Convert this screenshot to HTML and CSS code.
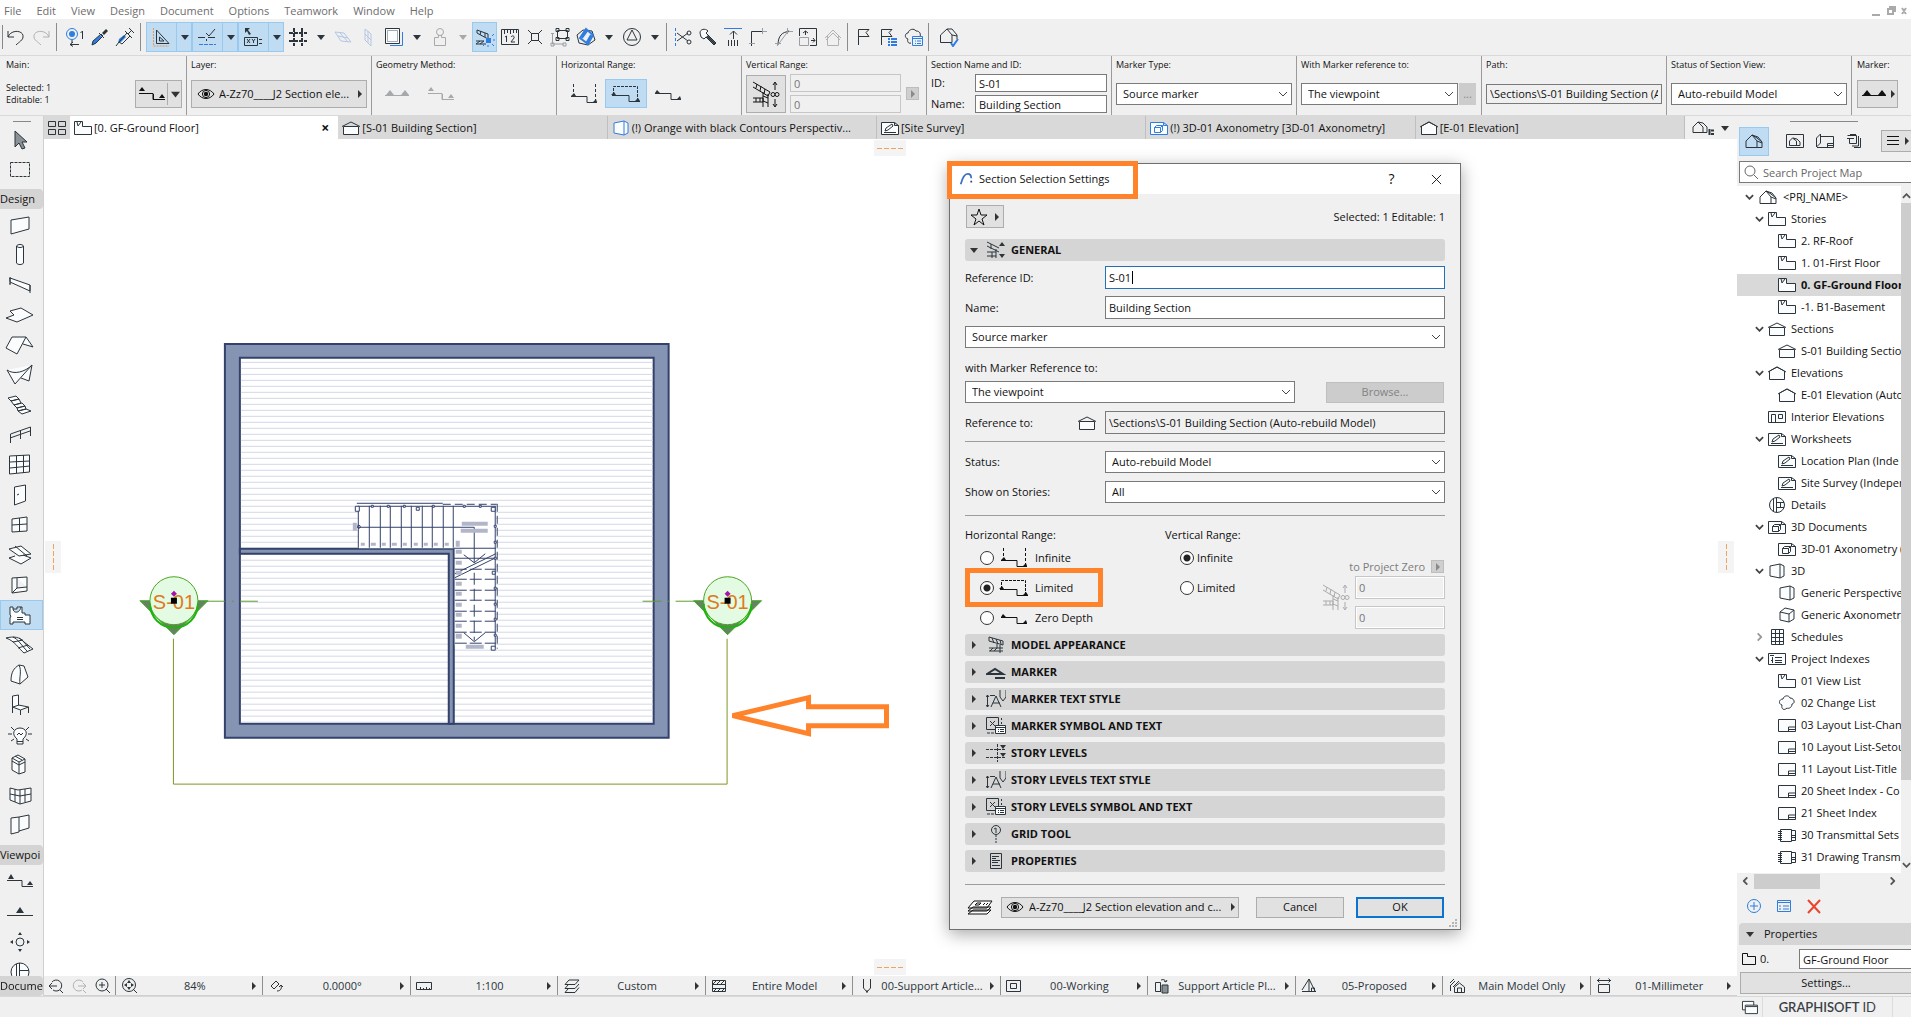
FILE: index.html
```html
<!DOCTYPE html>
<html lang="en">
<head>
<meta charset="utf-8">
<title>Section Selection Settings</title>
<link rel="stylesheet" href="styles.css">
</head>
<body>
<svg class="defs" aria-hidden="true">
  <!-- generic glyphs -->
  <symbol id="down" viewBox="0 0 8 6"><path class="solid" d="M0 1h8L4 6z"/></symbol>
  <symbol id="right" viewBox="0 0 6 8"><path class="solid" d="M1 0v8l4-4z"/></symbol>
  <symbol id="chev" viewBox="0 0 10 6"><path d="M1 1l4 4 4-4"/></symbol>
  <symbol id="eye" viewBox="0 0 18 12"><path d="M1 6c4-6 12-6 16 0-4 6-12 6-16 0z"/><circle cx="9" cy="6" r="3.6"/><circle class="solid" cx="9" cy="6" r="2.2"/></symbol>
  <!-- section line markers -->
  <symbol id="sec-line" viewBox="0 0 30 20"><path d="M2 9.500h14v6h12M16.500 10v5"/><path class="solid" d="M2 7l3-4 3 4zM22 14l3-4 3 4z"/></symbol>
  <symbol id="sec-flat" viewBox="0 0 30 20"><path d="M3 11.500h24"/><path class="solid" d="M4 11l4-5 4 5zM19 11l4-5 4 5z"/></symbol>
  <symbol id="sec-inf" viewBox="0 0 30 20"><path d="M2 12.500h16v6h10"/><path stroke-dasharray="3 2" d="M4.500 0v12M26.500 0v17"/><path class="solid" d="M2 12l3-3 2 3zM24 18l3-3 1 3z"/></symbol>
  <symbol id="sec-lim" viewBox="0 0 30 20"><path d="M1 11.500h17v6h11"/><path stroke-dasharray="3 1" d="M2.500 11V2.500h24V17"/><path class="solid" d="M0 11l3-3 2 3zM24 17l3-3 2 3z"/></symbol>
  <symbol id="sec-zero" viewBox="0 0 30 20"><path d="M2 9.500h16v6h10"/><path class="solid" d="M2 9l2-3 3 3zM24 15l3-3 1 3z"/></symbol>
  <symbol id="vrange" viewBox="0 0 28 28"><path d="M1 2l17 10-2 4L1 7M5 4l-1 4M9 6l-1 5M13 9l-1 5M1 18h10v4H1M4 18v4M8 18v4M11 12v15M16 14v13M11 16l5 2M11 21l5 2M23 10V3M21 5l2-3 2 3M23 19v7M21 24l2 3 2-3"/><circle cx="21" cy="14.500" r="2"/><circle cx="25" cy="14.500" r="2"/></symbol>
  <!-- document kinds -->
  <symbol id="story" viewBox="0 0 18 16"><path class="paper" d="M.5 1.500h8v5h9v8H.5zM3 2l1 4 3-4"/></symbol>
  <symbol id="section" viewBox="0 0 18 16"><path class="paper" d="M1.500 6.500h15v8h-15z"/><path d="M0 6.500L9 2l9 4.500"/></symbol>
  <symbol id="elev" viewBox="0 0 18 16"><path class="paper" d="M1.500 14.500V6L9 2l7.500 4v8.500z"/><path d="M0 7l9-5 9 5"/></symbol>
  <symbol id="interior" viewBox="0 0 18 16"><path class="paper" d="M.5 2.500h17v11H.5zM3.500 14V5.500h4V14M10.500 5.500h4v4h-4z"/></symbol>
  <symbol id="sheet" viewBox="0 0 18 16"><path class="paper" d="M.5 2.500h13l4 3v9H.5zM13.500 2.500v3h4M3 12.500h12M4 11l1-3 6-4 1 2-5 4z"/></symbol>
  <symbol id="detail" viewBox="0 0 18 16"><circle class="paper" cx="9" cy="8" r="7.500"/><path d="M5.500 2v12M8.500 1v14M9 5.500h7M9 10.500h7M12.500 6v4"/></symbol>
  <symbol id="doc3d" viewBox="0 0 18 16"><path class="paper" d="M.5 2.500h13l4 3v9H.5zM13.500 2.500v3h4M4.500 7.500h6v5h-6zM4.500 7.500l2-2h6l-2 2M12.500 5.500v5l-2 2"/></symbol>
  <symbol id="persp" viewBox="0 0 18 16"><path class="paper" d="M2 3l10-2 4 2v10l-4 2-10-2zM12 1v14"/></symbol>
  <symbol id="axo" viewBox="0 0 18 16"><path class="paper" d="M2 5l5-4 9 2v9l-5 3-9-2zM2 5l9 2v8M11 7l5-4"/></symbol>
  <symbol id="sched" viewBox="0 0 18 16"><path class="paper" d="M3.500.5h12v15h-12zM3 4.500h12M3 8.500h12M3 12.500h12M7.500 1v14M11.500 1v14"/></symbol>
  <symbol id="index" viewBox="0 0 18 16"><path class="paper" d="M.5 2.500h17v11H.5z"/><path d="M7 6.500h7M7 9.500h7M7 11.500h7M4.500 6v6M2 4.500h4M3 9.500h2"/></symbol>
  <symbol id="cloud" viewBox="0 0 18 16"><path class="paper" d="M5 4c1-4 6-4 7-1 4 0 6 5 2 6 0 4-4 5-5 4-3 3-6 1-5-3C0 9 1 4 5 4z"/></symbol>
  <symbol id="layout" viewBox="0 0 18 16"><path class="paper" d="M.5 2.500h17v12H.5zM10.500 14v-4h7M10.500 12.500h7"/></symbol>
  <symbol id="trans" viewBox="0 0 18 16"><path class="paper" d="M2.500 2.500h11v12h-11zM13.500 3.500h4v10h-4M13.500 8.500h4M13.500 10.500h4M0 4.500h4M0 6.500h4M0 8.500h4M0 10.500h4M0 12.500h4"/></symbol>
  <symbol id="house" viewBox="0 0 18 14"><path d="M1 13.500V7l6-6 5 6v6.500zM7 1l6 2 4 5v5.500h-5M12 7l5 2M7 1l5 3 5 4"/></symbol>
  <!-- settings chapters -->
  <symbol id="general" viewBox="0 0 20 18"><path d="M1 1l12 6M1 5l12 6M5 3v5M1 11h9M1 15h9M10 8v9M6 11v6"/><path class="solid" d="M13 5h6l-3-4zM13 13h6l-3 4z"/></symbol>
  <symbol id="model" viewBox="0 0 20 18"><path d="M3 1l14 4v4L3 5zM6 2l2 5M10 3l2 5M14 4l1 4M3 12h14M3 15h14M4 15l3-3M8 15l3-3M14 9v8M11 8v4"/></symbol>
  <symbol id="marker" viewBox="0 0 20 18"><path stroke-width="2" d="M1 11h16L9 6zM9 15h10"/></symbol>
  <symbol id="tstyle" viewBox="0 0 20 18"><path d="M1.500 5v12M0 7l1.500-2L3 7M0 15l1.500 2L3 15M4 5.500h5M5 17l5-11 5 11M7 13h7M14 0v7l3 4 3-4V0"/></symbol>
  <symbol id="symtext" viewBox="0 0 20 18"><path d="M.5.5h12v12H.5zM4 4l5 5M9 4l-5 5"/><path class="paper" d="M9.500 8.500h10v8h-10z"/><path d="M10 10.500h9M12 12.500h1M14 12.500h4M12 14.500h1M14 14.500h4M1 16h3M5 16h3M15.500 1v2M15.500 5v2"/></symbol>
  <symbol id="levels" viewBox="0 0 20 18"><path stroke-dasharray="3 1" d="M0 5.500h20M0 13.500h20M11.500 0v18"/><path class="solid" d="M14 1h6l-3 4zM14 9h6l-3 4z"/></symbol>
  <symbol id="grid-tool" viewBox="0 0 20 18"><circle cx="10" cy="5" r="4.500"/><path d="M8 4l2-1v5"/><path stroke-dasharray="2 1" d="M10 10v8"/></symbol>
  <symbol id="props" viewBox="0 0 20 18"><path d="M4.500 1.500h11v15h-11zM6 4.500h7M6 6.500h4M6 8.500h8M6 10.500h6M6 13.500h8"/></symbol>
  <symbol id="layers" viewBox="0 0 26 16"><path class="paper" d="M1 15l5-4h18l-4 4zM1 12l5-4h18l-4 4zM1 9l6-7h18l-5 7zM8 6l2-2h4l-2 2zM16 6l2-2M19 6l2-2"/></symbol>
</svg>

<nav class="menu">
  <a href="#">File</a><a href="#">Edit</a><a href="#">View</a><a href="#">Design</a><a href="#">Document</a><a href="#">Options</a><a href="#">Teamwork</a><a href="#">Window</a><a href="#">Help</a>
  <svg class="winctl" viewBox="0 0 36 12"><path d="M1 10h8M17 4h5v5h-5zM18 2h6v5M31 3l4 6M35 3l-4 6" stroke-width="2"/></svg>
</nav>

<div class="toolbar">
  <button class="tb" aria-label="Undo"><svg viewBox="0 0 20 20"><path d="M2 4v6h6M2 10c3-8 16-7 15 0 0 3-4 5-7 8"/></svg></button>
  <button class="tb dim" aria-label="Redo"><svg viewBox="0 0 20 20"><path d="M18 4v6h-6M18 10C15 2 2 3 3 10c0 3 4 5 7 8"/></svg></button>
  <i class="sep"></i>
  <button class="tb" aria-label="Find"><svg viewBox="0 0 20 20"><g class="blue"><circle cx="7" cy="7" r="5.500"/></g><circle cx="7" cy="7" r="3" class="bsolid"/><path d="M7 13v3M17.500 12V4l-2 2M14 17.500H5M8 15l-3 2.500 3 2"/></svg></button>
  <button class="tb" aria-label="Pick up"><svg viewBox="0 0 20 20"><path class="bsolid" d="M2 18l1-4 7-6 2 2-7 7z"/><path d="M9 6l5 5M2 18l1-4 8-7 2 2-7 7z"/><path class="solid" d="M12 6l4-4 2 2-4 4z"/></svg></button>
  <button class="tb" aria-label="Inject"><svg viewBox="0 0 20 20"><path class="bsolid" d="M3 16l1-4 5-4 2 2-5 5z"/><path d="M1 19l3-4 8-9 3 3-8 8-3-2M10 4l7 7M13 7l4-4M14 1l5 5"/></svg></button>
  <i class="sep"></i>
  <span class="split on"><button class="tb" aria-label="Guide lines"><svg viewBox="0 0 20 20"><path d="M5.500 3v13.500H18zM8.500 10v4H13z"/><path class="orange" stroke-dasharray="2 1" d="M2.500 1v18H18"/></svg></button><button class="dd" aria-label="More"><svg><use href="#down"/></svg></button></span>
  <span class="split on"><button class="tb" aria-label="Snap guides"><svg viewBox="0 0 20 20"><path d="M1 10.500h7M9 6l3 3 6-7M11 10.500h7M9.500 12v2"/><path class="blue" stroke-dasharray="4 1" d="M2 17.500h17"/></svg></button><button class="dd" aria-label="More"><svg><use href="#down"/></svg></button></span>
  <span class="split on"><button class="tb" aria-label="Tracker"><svg viewBox="0 0 20 20"><path d="M1.500 10.500h13v8h-13zM4 12l3 4M7 12l-3 4M9 12l1.500 2 1.500-2M10.500 14v2M16 12.500h3M16 16.500h3"/><path class="solid" d="M2 1h5L5 3l3 4-2 1-2-4-2 2z"/></svg></button><button class="dd" aria-label="More"><svg><use href="#down"/></svg></button></span>
  <span class="split"><button class="tb" aria-label="Grid snap"><svg viewBox="0 0 20 20"><path stroke-width="2" stroke-dasharray="4 1" d="M1 6h18M1 14h18M6 1v18M14 1v18"/></svg></button><button class="dd" aria-label="More"><svg><use href="#down"/></svg></button></span>
  <button class="tb pale" aria-label="Plane"><svg viewBox="0 0 20 20"><path d="M2 5l9 1 7 9-10-1zM5 9l10 2M7 6l8 9"/></svg></button>
  <button class="tb pale" aria-label="Wall plane"><svg viewBox="0 0 20 20"><path d="M7 2l6 5v12l-6-6zM10 4v12M7 7l6 6"/></svg></button>
  <span class="split"><button class="tb" aria-label="Trace"><svg viewBox="0 0 20 20"><path class="blue" d="M6 18.500h12.500V5"/><path class="paper" d="M1.500 1.500h14v15h-14z"/><path d="M3.500 3.500h10v11h-10z" opacity=".4"/></svg></button><button class="dd" aria-label="More"><svg><use href="#down"/></svg></button></span>
  <span class="split dim"><button class="tb" aria-label="Stamp"><svg viewBox="0 0 20 20"><circle cx="10" cy="5" r="3.500"/><path d="M8.500 8v2.500h-4v8h11v-8h-4V8"/></svg></button><button class="dd" aria-label="More"><svg><use href="#down"/></svg></button></span>
  <button class="tb on" aria-label="Suspend groups"><svg viewBox="0 0 20 20"><path d="M2 3l11 4v5L2 6zM6 4l-1 4M10 6v4M1 14h8M1 17h10M1 17l4-3M5 17l4-3"/><path class="bsolid" d="M11 11h5v5h-5z"/><path class="blue" d="M17 9l2-2M18 13h2M17 17l2 2M13 18v2M9 18l-1 1"/></svg></button>
  <button class="tb" aria-label="Ruler"><svg viewBox="0 0 20 20"><path d="M1.500 2.500h17v15h-17zM4.500 3v4M7.500 3v3M10.500 3v4M13.500 3v3M16.500 3v3M5 10l1.500-1v6M11 10c1-2 4-1 3 1l-3 4h4"/></svg></button>
  <button class="tb" aria-label="Explode"><svg viewBox="0 0 20 20"><path d="M6.500 6.500h7v7h-7zM3 3l4 4M17 3l-4 4M3 17l4-4M17 17l-4-4"/></svg></button>
  <button class="tb" aria-label="Group"><svg viewBox="0 0 20 20"><path d="M7.500 3.500h10v8h-10zM6 1.500h3v3H6zM16 1.500h3v3h-3zM16 10.500h3v3h-3zM6 10.500h3v3H6z"/><path class="mid" d="M2.500 7v10h11M1 6.500h3M1 16h3v3H1zM13 16h3v3h-3z"/></svg></button>
  <span class="split"><button class="tb" aria-label="3D projection"><svg viewBox="0 0 20 20"><path d="M1 8l6-5 9 1 3 9-7 5-9-2z"/><path class="blue" stroke-width="2" d="M10 2l7 6-5 9-8-6zM6 11l5-7M11 15l4-7"/></svg></button><button class="dd" aria-label="More"><svg><use href="#down"/></svg></button></span>
  <span class="split"><button class="tb" aria-label="Orbit"><svg viewBox="0 0 20 20"><circle cx="10" cy="10" r="8.500"/><path d="M10 3l-5 10h10z"/></svg></button><button class="dd" aria-label="More"><svg><use href="#down"/></svg></button></span>
  <i class="sep tight"></i>
  <button class="tb" aria-label="Trim"><svg viewBox="0 0 20 20"><path class="blue" stroke-dasharray="3 2" d="M2.500 1v18"/><path d="M4 6l11 8M4 14l11-8"/><circle cx="16" cy="6" r="2"/><circle cx="16" cy="15" r="2"/></svg></button>
  <button class="tb" aria-label="Adjust"><svg viewBox="0 0 20 20"><path class="paper" d="M2 6c0-4 5-5 8-2L8 6l10 10-2 2L8 10l-2 2-3-2z"/><path stroke-width="2" d="M9 9l8 8"/></svg></button>
  <button class="tb" aria-label="Elevate"><svg viewBox="0 0 20 20"><path class="blue" d="M1 1.500h18"/><path d="M10.500 12V4M7 7.500L10.500 4 14 7.500M5.500 13v6M8.500 13v6M11.500 13v6M14.500 13v6"/></svg></button>
  <button class="tb" aria-label="Intersect"><svg viewBox="0 0 20 20"><path d="M3.500 19V4.500H14"/><path class="mid" d="M14 4.500h5M14.500 1v6M1 16.500h6"/></svg></button>
  <button class="tb" aria-label="Fillet"><svg viewBox="0 0 20 20"><path d="M5 18C5 9 9 4.500 17 4.500"/><path class="mid" d="M4 19L16 3M14.500 1v6M2 16.500h6M16 4.500h4"/></svg></button>
  <button class="tb" aria-label="Resize"><svg viewBox="0 0 20 20"><path d="M1.500 9V1.500h17v17H12M7.500 8V4M5 6l2.500-2L10 6M13 13.500h4M15 11l2 2.500-2 2"/><path class="mid" d="M1.500 10.500h9v8h-9z"/></svg></button>
  <button class="tb dim" aria-label="Home story"><svg viewBox="0 0 20 20"><path d="M2 11l8-8 8 8M4.500 9v9.500h11V9M3 13l7-7 7 7"/></svg></button>
  <i class="sep tight"></i>
  <button class="tb" aria-label="Flag"><svg viewBox="0 0 20 20"><path d="M4.500 18V2.500H15l-3 3 3 4H5"/></svg></button>
  <button class="tb" aria-label="Flag list"><svg viewBox="0 0 20 20"><path d="M2.500 18V2.500H13l-3 3 3 4H3"/><path class="blue" stroke-width="2" d="M9 12h2M12 12h6M9 15h2M12 15h6M9 18h2M12 18h6"/></svg></button>
  <button class="tb" aria-label="Change"><svg viewBox="0 0 20 20"><path d="M7 16c-3 1-4-2-3-4-4-1-3-6 0-6 1-4 6-5 8-2 4 0 5 3 4 6"/><path class="blue" d="M8.500 9.500h10v9h-10zM9 11.500h10M11 14h1M13 14h4M11 16.500h1M13 16.500h4"/></svg></button>
  <i class="sep tight"></i>
  <button class="tb wide" aria-label="Check model"><svg viewBox="0 0 20 20"><path d="M1.500 15.500V8L8 2l5 6v7.500zM8 2h5l5 6v4M13 8l5 1"/><path class="blue" stroke-width="2" d="M12 16l2 3 5-7"/></svg></button>
</div>

<div class="infobox">
  <section><h2>Main:</h2><div class="row between"><p class="tiny">Selected: 1<br>Editable: 1</p><button class="btn b47" aria-label="Default settings"><svg class="s30"><use href="#sec-line"/></svg><svg class="ar bar"><use href="#down"/></svg></button></div></section>
  <section><h2>Layer:</h2><div class="row"><button class="btn grow"><svg class="eye"><use href="#eye"/></svg><span class="clip">A-Zz70____J2 Section ele...</span><svg class="ar"><use href="#right"/></svg></button></div></section>
  <section><h2>Geometry Method:</h2><div class="row geo dim"><svg class="s30"><use href="#sec-flat"/></svg><svg class="s30"><use href="#sec-line"/></svg></div></section>
  <section><h2>Horizontal Range:</h2><div class="row hr"><button class="ib" aria-label="Infinite"><svg class="s30"><use href="#sec-inf"/></svg></button><button class="ib on" aria-label="Limited"><svg class="s30"><use href="#sec-lim"/></svg></button><button class="ib" aria-label="Zero depth"><svg class="s30"><use href="#sec-zero"/></svg></button></div></section>
  <section><h2>Vertical Range:</h2><div class="row"><button class="btn vr" aria-label="Vertical range"><svg class="s28"><use href="#vrange"/></svg></button><div class="stack grow"><input disabled value="0" aria-label="Top"><input disabled value="0" aria-label="Bottom"></div><button class="mini" disabled aria-label="Link"><svg class="ar"><use href="#right"/></svg></button></div></section>
  <section><h2>Section Name and ID:</h2><div class="row"><div class="pair grow"><label for="id1">ID:</label><input id="id1" value="S-01"><label for="nm1">Name:</label><input id="nm1" value="Building Section"></div></div></section>
  <section><h2>Marker Type:</h2><div class="row"><span class="sel grow"><select aria-label="Marker type"><option>Source marker</option></select><svg><use href="#chev"/></svg></span></div></section>
  <section><h2>With Marker reference to:</h2><div class="row tightrow"><span class="sel grow"><select aria-label="Marker reference"><option>The viewpoint</option></select><svg><use href="#chev"/></svg></span><button class="dots" disabled>...</button></div></section>
  <section><h2>Path:</h2><div class="row"><input class="ro grow" readonly aria-label="Path" value="\Sections\S-01 Building Section (Auto-rebuild Model)"></div></section>
  <section><h2>Status of Section View:</h2><div class="row"><span class="sel grow"><select aria-label="Status"><option>Auto-rebuild Model</option></select><svg><use href="#chev"/></svg></span></div></section>
  <section><h2>Marker:</h2><div class="row"><button class="btn b41" aria-label="Marker"><svg class="s30"><use href="#sec-flat"/></svg><svg class="ar"><use href="#right"/></svg></button></div></section>
</div>

<div class="main">
  <aside class="tools">
    <i class="handle"></i>
    <button aria-label="Arrow"><svg viewBox="0 0 30 24"><path class="greyfill" d="M10 3v16l4-4 3 6 3-1-3-6h5z"/></svg></button>
    <button aria-label="Marquee"><svg viewBox="0 0 30 24"><path stroke-dasharray="3 1" d="M5.500 4.500h19v14h-19z"/></svg></button>
    <h3>Design</h3>
    <button aria-label="Wall"><svg viewBox="0 0 30 24"><path class="paper" d="M6 7l18-3v12L6 21z"/></svg></button>
    <button aria-label="Column"><svg viewBox="0 0 30 24"><path class="paper" d="M11.500 3v17c1 2 6 2 7 0V3c-1-2-6-2-7 0zc1 2 6 2 7 0"/></svg></button>
    <button aria-label="Beam"><svg viewBox="0 0 30 24"><path class="paper" d="M5 5l20 7v6L5 9zM5 5v6M4 5h2M4 11h2M25 12v8"/></svg></button>
    <button aria-label="Slab"><svg viewBox="0 0 30 24"><path class="paper" d="M1 15l8-3-4-4 11-3 12 7-16 7z"/></svg></button>
    <button aria-label="Roof"><svg viewBox="0 0 30 24"><path class="paper" d="M7 4h14l-9 17-11-6zM21 4l7 10-10-3"/></svg></button>
    <button aria-label="Shell"><svg viewBox="0 0 30 24"><path class="paper" d="M2 7c7 5 18 2 25-5l-3 16-8-3M27 2L10 21 2 7"/></svg></button>
    <button aria-label="Stair"><svg viewBox="0 0 30 24"><path class="paper" d="M3 5l8-2 3 3-8 2zM6 8l8-2 2 4-7 2zM9 12l8-2 3 3-8 2zM12 15l8-2 1 3-8 2zM13 18l8-2 5 2-9 3z"/></svg></button>
    <button aria-label="Railing"><svg viewBox="0 0 30 24"><path d="M5.500 20v-9l20-7v9M15.500 7v9M5 15l20-7"/></svg></button>
    <button aria-label="Curtain wall"><svg viewBox="0 0 30 24"><path class="paper" d="M4.500 3l20-1v17l-20 2zM5 9l20-1M5 15l20-2M11.500 3v17M18.500 2v18"/></svg></button>
    <button aria-label="Door"><svg viewBox="0 0 30 24"><path class="paper" d="M9.500 4l11-2v16l-11 4zM12 12l2-1"/></svg></button>
    <button aria-label="Window"><svg viewBox="0 0 30 24"><path class="paper" d="M7 6l15-2v14L7 19zM14.500 5v14M7 12l15-1"/></svg></button>
    <button aria-label="Skylight"><svg viewBox="0 0 30 24"><path class="paper" d="M4 6l12-3 10 8-12 2zM4 15l6-2M4 15l12 6 10-6-8-3M10 3l12 10"/></svg></button>
    <button aria-label="Opening"><svg viewBox="0 0 30 24"><path class="paper" d="M7 5l15-1v14L7 20zM12 5v10l10-1M12 15l-5 5"/></svg></button>
    <button class="on" aria-label="Zone"><svg viewBox="0 0 30 24"><path class="paper" d="M5 4h3v2h4V4h5v6h3v2h5v9h-5v-2H8v2H5v-6l1-2-1-1zM8 6c1 5 7 4 8-2M12 14.500h6M12 16.500h6"/></svg></button>
    <button aria-label="Mesh"><svg viewBox="0 0 30 24"><path class="paper" d="M1 5c8-2 14-1 18 4l9 7-9 4C14 16 10 8 1 5zM8 4c5 2 9 9 14 14M14 5c5 3 7 7 11 11M8 9l10-2M13 15l10-3"/></svg></button>
    <button aria-label="Morph"><svg viewBox="0 0 30 24"><path class="paper" d="M6 18c0-9 3-13 8-16l5 1 4 11-8 7zM14 2c3 6 0 12 1 19"/></svg></button>
    <button aria-label="Object"><svg viewBox="0 0 30 24"><path class="paper" d="M7.500 3l6-1v10l10 2-8 3-8-3z"/><path d="M7.500 3v17M15.500 17v5M23.500 14v6M8 14l6-2"/></svg></button>
    <button aria-label="Lamp"><svg viewBox="0 0 30 24"><path class="paper" d="M12 16c-6-5-3-11 3-11s9 6 3 11v5h-6zM12 18.500h6M12 12l2-2 2 2 2-2"/><path d="M3 11h4M23 11h4M6 4l3 3M24 4l-3 3M6 18l3-2M24 18l-3-2"/></svg></button>
    <button aria-label="Equipment"><svg viewBox="0 0 30 24"><path class="paper" d="M7 5l6-3 7 4v13l-6 2-7-4zM7 5l7 4v12M14 9l6-3M7 8l7 4 6-3M10 3l7 4"/></svg></button>
    <button aria-label="Grid"><svg viewBox="0 0 30 24"><path class="paper" d="M5 5l8 2 13-2v13l-11 3-10-4zM5 11l10 2 11-2M10 6v13M15 7v14M20 6v13"/></svg></button>
    <button aria-label="Panel"><svg viewBox="0 0 30 24"><path class="paper" d="M6 5l8-1v15l-8 2zM14 4l10-2v13l-10 3"/></svg></button>
    <h3 class="mid-head">Viewpoi</h3>
    <button aria-label="Section"><svg viewBox="0 0 30 24"><path d="M2 10.500h15v6h11"/><path class="solid" d="M3 9l3-5 3 5zM22 15l3-4 3 4z"/></svg></button>
    <button aria-label="Elevation"><svg viewBox="0 0 30 24"><path d="M2 15.500h26"/><path class="solid" d="M11 13l4-6 4 6z"/></svg></button>
    <button aria-label="Interior elevation"><svg viewBox="0 0 30 24"><circle cx="15" cy="12" r="4"/><path class="solid" d="M13 5h4l-2-3zM13 19h4l-2 3zM8 10v4l-3-2zM22 10v4l3-2z"/></svg></button>
    <button aria-label="Detail"><svg viewBox="0 0 30 24"><circle class="paper" cx="15" cy="12" r="9"/><path d="M11.500 4v16M14.500 3v18M15 10.500h9"/></svg></button>
    <h3 class="last">Docume</h3>
  </aside>

  <div class="center">
    <div class="tabs">
      <button class="grid4" aria-label="Overview"><svg viewBox="0 0 18 14"><path d="M.5.5h7v5h-7zM10.500.5h7v5h-7zM.5 8.500h7v5h-7zM10.500 8.500h7v5h-7z"/></svg></button>
      <a href="#" class="tab cur"><svg class="d"><use href="#story"/></svg><span>[0. GF-Ground Floor]</span><b>×</b></a>
      <a href="#" class="tab"><svg class="d"><use href="#section"/></svg><span>[S-01 Building Section]</span></a>
      <a href="#" class="tab"><svg class="d blue"><use href="#persp"/></svg><span>(!) Orange with black Contours Perspectiv...</span></a>
      <a href="#" class="tab"><svg class="d"><use href="#sheet"/></svg><span>[Site Survey]</span></a>
      <a href="#" class="tab"><svg class="d blue"><use href="#doc3d"/></svg><span>(!) 3D-01 Axonometry [3D-01 Axonometry]</span></a>
      <a href="#" class="tab"><svg class="d"><use href="#elev"/></svg><span>[E-01 Elevation]</span></a>
      <button class="tabmenu" aria-label="Tab options"><svg class="tm" viewBox="0 0 22 14"><path d="M1 11.500V6l5-5 5 5v5.500zM6 1l5 1 4 4v5.500h-4"/><path d="M17.500 8v6M19 9.500h3M19 13h3" stroke-width="2"/></svg><svg class="ar"><use href="#down"/></svg></button>
    </div>

    <div class="canvas">
      <svg class="plan" viewBox="44 139 1694 837" preserveAspectRatio="xMinYMin meet">
        <defs>
          <pattern id="hatch" x="0" y="357" width="8" height="6" patternUnits="userSpaceOnUse"><path d="M0 5.500h8" stroke="#d3d8e6"/></pattern>
          <g id="mark">
            <path d="M-34 0h68L0 34z" fill="#6a7f66" stroke="#35b01c"/>
            <circle r="24" fill="#e2fbe2" stroke="#4aa51f"/>
            <path d="M-24 3A24 24 0 0 0 24 3" fill="none" stroke="#1fb312" stroke-width="2"/>
            <text x="0" y="8" text-anchor="middle">S-01</text>
            <path d="M-3-7l3-3 3 3-3 3z" fill="#a516a8"/><path d="M-3-3h6v6h-6z" fill="#000"/>
          </g>
        </defs>
        <path fill="#8694b4" stroke="#33416b" stroke-width="2" fill-rule="evenodd" d="M225 344h444v394H225zM240 358h414v366H240z"/>
        <path fill="url(#hatch)" d="M241 359h412v364H241z"/>
        <path fill="#8694b4" stroke="#33416b" stroke-width="2" d="M240 549h214v175h-5V554H240z"/>
        <g fill="none" stroke="#33416b">
          <path fill="#fff" d="M358.500 505.500h137v140H455v-97h-96z" stroke="none"/>
          <path d="M357 503.500h86M358.500 506.500h137M358.500 506v42M369.500 506v42M380.500 506v42M390.500 506v42M401.500 506v42M411.500 506v42M422.500 506v42M432.500 506v42M443.500 506v42M453.500 506v42M495.500 506v142M359 527.500h115.500V563M454 548.500h42M454 558.500h42"/>
          <path stroke-dasharray="8 4" d="M443 504.500h54M497.500 504v145"/>
          <path stroke-dasharray="12 3" d="M455 569.500h41M455 579.500h41M455 590.500h41M455 600.500h41M455 611.500h41M455 621.500h41M455 632.500h41M455 643.500h41"/>
          <path stroke-dasharray="12 4" d="M474.500 573v68"/>
          <path d="M464 555l10.500 8 11-9M464 633l10.500 9 11-9M455 574l41-20M455 578l41-20"/>
          <path fill="#fff" d="M355.500 506.500h4v5h-4zM371.500 505.500h2v2h-2zM387.500 505.500h2v2h-2zM403.500 505.500h2v2h-2zM416.500 507.500h3v3h-3zM432.500 505.500h2v2h-2zM463.500 505.500h2v2h-2zM479.500 505.500h2v2h-2zM491.500 507.500h4v4h-4zM494.500 525.500h2v2h-2zM494.500 541.500h2v2h-2zM494.500 557.500h2v2h-2zM492.500 571.500h3v3h-3zM494.500 587.500h2v2h-2zM494.500 603.500h2v2h-2zM494.500 618.500h2v2h-2zM494.500 634.500h2v2h-2zM491.500 646.500h4v4h-4z"/>
          <circle cx="359" cy="527" r="1.500"/>
        </g>
        <path fill="#b2b6c8" d="M462 522h26v4h-26zM461 529h27v4h-27zM353 523h4v8h-4zM361 543h4v3h-4zM371 543h5v3h-5zM382 543h4v3h-4zM392 543h5v3h-5zM403 543h4v3h-4zM414 543h4v3h-4zM424 543h4v3h-4zM434 543h4v3h-4zM445 543h4v3h-4zM456 541h4v6h-4zM456 550h6v4h-6zM456 561h6v4h-6zM456 571h6v4h-6zM456 582h6v4h-6zM456 592h6v4h-6zM456 603h6v4h-6zM456 613h6v4h-6zM456 624h6v4h-6zM456 634h6v5h-6zM466 645h18v4h-18z"/>
        <path fill="none" stroke="#7d9622" d="M173.500 639v145.500h554V639"/>
        <path stroke="#5f9c2b" d="M207 601.500h18M232 601.500h2M240 601.500h18M643 601.500h19M668 601.500h2M676 601.500h19"/>
        <use href="#mark" x="174" y="601"/><use href="#mark" x="728" y="601"/>
        <path fill="#fff" stroke="#ff832b" stroke-width="5" d="M733 716l76-18v9h78v19h-78v8z"/>
      </svg>
      <i class="grip g-top"></i><i class="grip g-bot"></i><i class="grip v g-left"></i><i class="grip v g-right"></i>

      <div class="dialog" role="dialog" aria-labelledby="dlg">
        <header>
          <svg class="logo" viewBox="0 0 16 16"><path d="M2 14C4 6 7 2 10 2c3 0 4 3 4 5" stroke="#3f6fc4" stroke-width="2"/><path d="M14 10v2" stroke="#23457f" stroke-width="2"/></svg>
          <h1 id="dlg">Section Selection Settings</h1>
          <button class="plain" aria-label="Help">?</button>
          <button class="plain" aria-label="Close"><svg viewBox="0 0 12 12"><path d="M1 1l10 10M11 1L1 11"/></svg></button>
        </header>
        <form class="body">
          <div class="line top"><button type="button" class="btn star" aria-label="Favorites"><svg viewBox="0 0 18 18"><path d="M9 1l2 6h6l-5 4 2 6-5-4-5 4 2-6-5-4h6z"/></svg><svg class="ar"><use href="#right"/></svg></button><span>Selected: 1 Editable: 1</span></div>
          <button type="button" class="chapter open"><svg class="ar"><use href="#down"/></svg><svg class="ci"><use href="#general"/></svg>GENERAL</button>
          <div class="field first"><label for="rid">Reference ID:</label><span class="caretbox"><input id="rid" class="focus" value="S-01"><i></i></span></div>
          <div class="field"><label for="nm">Name:</label><input id="nm" value="Building Section"></div>
          <span class="sel mt7"><select aria-label="Marker type"><option>Source marker</option></select><svg><use href="#chev"/></svg></span>
          <label class="mref" for="mref">with Marker Reference to:</label>
          <div class="line vp"><span class="sel"><select id="mref"><option>The viewpoint</option></select><svg><use href="#chev"/></svg></span><button type="button" class="browse" disabled>Browse...</button></div>
          <div class="field ref"><label for="rto">Reference to:</label><svg class="d"><use href="#section"/></svg><input id="rto" class="ro" readonly value="\Sections\S-01 Building Section (Auto-rebuild Model)"></div>
          <hr>
          <div class="field"><label for="st">Status:</label><span class="sel"><select id="st"><option>Auto-rebuild Model</option></select><svg><use href="#chev"/></svg></span></div>
          <div class="field stories"><label for="ss">Show on Stories:</label><span class="sel"><select id="ss"><option>All</option></select><svg><use href="#chev"/></svg></span></div>
          <hr class="low">
          <div class="ranges">
            <div role="radiogroup" aria-labelledby="hrl">
              <p id="hrl">Horizontal Range:</p>
              <label class="rad"><input type="radio" name="h"><svg class="s30"><use href="#sec-inf"/></svg>Infinite</label>
              <label class="rad"><input type="radio" name="h" checked><svg class="s30"><use href="#sec-lim"/></svg>Limited</label>
              <label class="rad"><input type="radio" name="h"><svg class="s30"><use href="#sec-zero"/></svg>Zero Depth</label>
            </div>
            <div role="radiogroup" aria-labelledby="vrl">
              <p id="vrl">Vertical Range:</p>
              <label class="rad"><input type="radio" name="v" checked>Infinite</label>
              <label class="rad"><input type="radio" name="v">Limited</label>
            </div>
            <div class="limits">
              <div class="zero">to Project Zero <button type="button" class="mini" disabled aria-label="Link"><svg class="ar"><use href="#right"/></svg></button></div>
              <svg class="s28"><use href="#vrange"/></svg>
              <div class="nums"><input disabled value="0" aria-label="Upper"><input disabled value="0" aria-label="Lower"></div>
            </div>
          </div>
          <div class="chapters">
            <button type="button" class="chapter"><svg class="ar"><use href="#right"/></svg><svg class="ci"><use href="#model"/></svg>MODEL APPEARANCE</button>
            <button type="button" class="chapter"><svg class="ar"><use href="#right"/></svg><svg class="ci"><use href="#marker"/></svg>MARKER</button>
            <button type="button" class="chapter"><svg class="ar"><use href="#right"/></svg><svg class="ci"><use href="#tstyle"/></svg>MARKER TEXT STYLE</button>
            <button type="button" class="chapter"><svg class="ar"><use href="#right"/></svg><svg class="ci"><use href="#symtext"/></svg>MARKER SYMBOL AND TEXT</button>
            <button type="button" class="chapter"><svg class="ar"><use href="#right"/></svg><svg class="ci"><use href="#levels"/></svg>STORY LEVELS</button>
            <button type="button" class="chapter"><svg class="ar"><use href="#right"/></svg><svg class="ci"><use href="#tstyle"/></svg>STORY LEVELS TEXT STYLE</button>
            <button type="button" class="chapter"><svg class="ar"><use href="#right"/></svg><svg class="ci"><use href="#symtext"/></svg>STORY LEVELS SYMBOL AND TEXT</button>
            <button type="button" class="chapter"><svg class="ar"><use href="#right"/></svg><svg class="ci"><use href="#grid-tool"/></svg>GRID TOOL</button>
            <button type="button" class="chapter"><svg class="ar"><use href="#right"/></svg><svg class="ci"><use href="#props"/></svg>PROPERTIES</button>
          </div>
          <hr class="low">
          <div class="actions">
            <svg class="lay"><use href="#layers"/></svg>
            <button type="button" class="btn"><svg class="eye"><use href="#eye"/></svg><span class="clip">A-Zz70____J2 Section elevation and c...</span><svg class="ar"><use href="#right"/></svg></button>
            <button type="button" class="btn push">Cancel</button>
            <button type="button" class="btn push ok">OK</button>
          </div>
        </form>
        <svg class="corner" viewBox="0 0 9 9"><path class="solid" d="M6 0h2v2H6zM3 3h2v2H3zM6 3h2v2H6zM0 6h2v2H0zM3 6h2v2H3zM6 6h2v2H6z"/></svg>
        <i class="note n1"></i><i class="note n2"></i>
      </div>
    </div>

    <div class="viewbar">
      <div class="nav">
        <button aria-label="Previous zoom"><svg viewBox="0 0 16 16"><path d="M4 4a5.500 5.500 0 1 1 1 8M1 8h8M4 5L1 8l3 3M12 12l3 3"/></svg></button>
        <button class="dim" aria-label="Next zoom"><svg viewBox="0 0 16 16"><path d="M12 4a5.500 5.500 0 1 0-1 8M15 8H7M12 5l3 3-3 3M12 12l3 3"/></svg></button>
        <button aria-label="Zoom in"><svg viewBox="0 0 16 16"><circle cx="7" cy="7" r="6"/><path d="M11 11l4 4M7 4v6M4 7h6"/></svg></button>
      </div>
      <button><svg viewBox="0 0 16 16"><circle cx="7" cy="7" r="6.500"/><path d="M11 11l4 4"/><path class="solid" d="M5 5h4L7 2zM5 9h4l-2 3zM5 5v4L2 7zM9 5v4l3-2z"/></svg><span>84%</span><svg class="ar"><use href="#right"/></svg></button>
      <button><svg viewBox="0 0 16 16"><path d="M2 8l5-5 3 3-5 5zM8 13c4 0 5-3 4-6M10 9l2-2 2 2"/></svg><span>0.0000°</span><svg class="ar"><use href="#right"/></svg></button>
      <button><svg viewBox="0 0 16 16"><path d="M.5 4.500h15v7H.5zM4.500 12V9M7.500 12v-2M10.500 12V9M13.500 12v-2"/></svg><span>1:100</span><svg class="ar"><use href="#right"/></svg></button>
      <button><svg viewBox="0 0 16 16"><path d="M1 6.500L5 2h10l-4 4.500zM1 10.500h10L15 6M1 14.500h10l4-5M1 10.500L4 7M1 14.500L4 11"/></svg><span>Custom</span><svg class="ar"><use href="#right"/></svg></button>
      <button><svg viewBox="0 0 16 16"><path d="M1.500 2.500h13v11h-13zM2 6.500h12M2 10.500h12M2 6l4-4M6 6l4-4M10 6l4-4M2 14l4-4M6 14l4-4M10 14l4-4"/></svg><span>Entire Model</span><svg class="ar"><use href="#right"/></svg></button>
      <button><svg viewBox="0 0 16 16"><path d="M4.500 1v9L8 14l3.500-4V1M8 12v3"/></svg><span>00-Support Article...</span><svg class="ar"><use href="#right"/></svg></button>
      <button><svg viewBox="0 0 16 16"><path d="M.5 2.500h14v11H.5zM4.500 5.500h6v5h-6z"/></svg><span>00-Working</span><svg class="ar"><use href="#right"/></svg></button>
      <button><svg viewBox="0 0 16 16"><path d="M7 13.500H1.500v-9h5v9M7 2c3-1 4 0 5 2M10 3l2 1 1-2"/><path class="greyfill" d="M8 7h6v8H8z"/></svg><span>Support Article Pl...</span><svg class="ar"><use href="#right"/></svg></button>
      <button><svg viewBox="0 0 16 16"><path d="M1 12L8 1l6 12M8 1v12M1 13.500h14M10.500 14v-4h3v4"/></svg><span>05-Proposed</span><svg class="ar"><use href="#right"/></svg></button>
      <button><svg viewBox="0 0 16 16"><path d="M1 8l5-5M1 5l4-4M4 9l6-6M5.500 14.500V9l5-4 5 4v5.500zM8.500 14v-4h4v4M1.500 8v5"/></svg><span>Main Model Only</span><svg class="ar"><use href="#right"/></svg></button>
      <button><svg viewBox="0 0 16 16"><path d="M2.500 6.500h11v8h-11zM1 2.500h14M3.500.5l-2 2 2 2M12.500.5l2 2-2 2"/></svg><span>01-Millimeter</span><svg class="ar"><use href="#right"/></svg></button>
    </div>
  </div>

  <aside class="navigator">
    <i class="handle"></i>
    <div class="navtabs">
      <button class="on" aria-label="Project map"><svg viewBox="0 0 18 14"><use href="#house"/></svg></button>
      <i></i>
      <button aria-label="View map"><svg viewBox="0 0 18 14"><path d="M.5.5h17v13H.5zM3.500 11.500V7l3-3 4 3v4.500zM7 4l4 1 3 3v3.500h-4"/></svg></button>
      <button aria-label="Layout book"><svg viewBox="0 0 18 14"><path d="M.5 4l4-4v9l-4 4zM5 2.500h12.500v11H1M11.500 13V9.500h6M11 11.500h6"/></svg></button>
      <button aria-label="Publisher"><svg viewBox="0 0 18 14"><path d="M1.500 1.500h9v8h-7v-5M1 4.500h7M10 .5H4M12.500 2v10H6M14.500 4v9.500H8"/></svg></button>
      <button class="btn burger" aria-label="Options"><svg viewBox="0 0 12 12"><path d="M0 1.500h12M0 5.500h12M0 9.500h12"/></svg><svg class="ar"><use href="#right"/></svg></button>
    </div>
    <label class="search"><svg viewBox="0 0 14 14"><circle cx="6" cy="6" r="5"/><path d="M10 10l4 4"/></svg><input placeholder="Search Project Map" aria-label="Search Project Map"></label>
    <div class="treewrap">
      <ul class="tree">
        <li class="l0"><svg class="tw"><use href="#chev"/></svg><svg class="d"><use href="#house"/></svg>&lt;PRJ_NAME&gt;</li>
        <li class="l1"><svg class="tw"><use href="#chev"/></svg><svg class="d"><use href="#story"/></svg>Stories</li>
        <li class="l2"><svg class="d"><use href="#story"/></svg>2. RF-Roof</li>
        <li class="l2"><svg class="d"><use href="#story"/></svg>1. 01-First Floor</li>
        <li class="l2 cur"><svg class="d"><use href="#story"/></svg>0. GF-Ground Floor</li>
        <li class="l2"><svg class="d"><use href="#story"/></svg>-1. B1-Basement</li>
        <li class="l1"><svg class="tw"><use href="#chev"/></svg><svg class="d"><use href="#section"/></svg>Sections</li>
        <li class="l2"><svg class="d"><use href="#section"/></svg>S-01 Building Section</li>
        <li class="l1"><svg class="tw"><use href="#chev"/></svg><svg class="d"><use href="#elev"/></svg>Elevations</li>
        <li class="l2"><svg class="d"><use href="#elev"/></svg>E-01 Elevation (Auto</li>
        <li class="l1 leaf"><svg class="d"><use href="#interior"/></svg>Interior Elevations</li>
        <li class="l1"><svg class="tw"><use href="#chev"/></svg><svg class="d"><use href="#sheet"/></svg>Worksheets</li>
        <li class="l2"><svg class="d"><use href="#sheet"/></svg>Location Plan (Inde</li>
        <li class="l2"><svg class="d"><use href="#sheet"/></svg>Site Survey (Indeper</li>
        <li class="l1 leaf"><svg class="d"><use href="#detail"/></svg>Details</li>
        <li class="l1"><svg class="tw"><use href="#chev"/></svg><svg class="d"><use href="#doc3d"/></svg>3D Documents</li>
        <li class="l2"><svg class="d"><use href="#doc3d"/></svg>3D-01 Axonometry (</li>
        <li class="l1"><svg class="tw"><use href="#chev"/></svg><svg class="d"><use href="#persp"/></svg>3D</li>
        <li class="l2"><svg class="d"><use href="#persp"/></svg>Generic Perspective</li>
        <li class="l2"><svg class="d"><use href="#axo"/></svg>Generic Axonometry</li>
        <li class="l1 shut"><svg class="tw"><use href="#chev"/></svg><svg class="d"><use href="#sched"/></svg>Schedules</li>
        <li class="l1"><svg class="tw"><use href="#chev"/></svg><svg class="d"><use href="#index"/></svg>Project Indexes</li>
        <li class="l2"><svg class="d"><use href="#story"/></svg>01 View List</li>
        <li class="l2"><svg class="d"><use href="#cloud"/></svg>02 Change List</li>
        <li class="l2"><svg class="d"><use href="#layout"/></svg>03 Layout List-Chan</li>
        <li class="l2"><svg class="d"><use href="#layout"/></svg>10 Layout List-Setou</li>
        <li class="l2"><svg class="d"><use href="#layout"/></svg>11 Layout List-Title</li>
        <li class="l2"><svg class="d"><use href="#layout"/></svg>20 Sheet Index - Co</li>
        <li class="l2"><svg class="d"><use href="#layout"/></svg>21 Sheet Index</li>
        <li class="l2"><svg class="d"><use href="#trans"/></svg>30 Transmittal Sets</li>
        <li class="l2"><svg class="d"><use href="#trans"/></svg>31 Drawing Transm</li>
      </ul>
      <div class="vscroll"><svg class="up"><use href="#chev"/></svg><i></i><svg><use href="#chev"/></svg></div>
    </div>
    <div class="hscroll"><svg class="lf"><use href="#chev"/></svg><i></i><svg class="rt"><use href="#chev"/></svg></div>
    <div class="treeacts">
      <button aria-label="Add"><svg viewBox="0 0 16 16" class="blue"><circle cx="8" cy="8" r="6.500"/><path d="M8 4v8M4 8h8"/></svg></button>
      <button aria-label="Settings"><svg viewBox="0 0 16 16" class="blue"><path d="M1.500 2.500h13v11h-13zM1 4.500h14M3 8h2M3 11h2M7 8h6M7 11h6"/></svg></button>
      <button aria-label="Delete"><svg viewBox="0 0 16 16" class="red"><path d="M2 2l12 13M14 2L2 15"/></svg></button>
    </div>
    <button class="prophead"><svg class="ar"><use href="#down"/></svg>Properties</button>
    <div class="prop"><svg viewBox="0 0 14 12"><path d="M.5.5h5v3h8v8H.5z"/></svg><label for="pn">0.</label><input id="pn" value="GF-Ground Floor"></div>
    <button class="btn settings">Settings...</button>
  </aside>
</div>

<footer class="status"><button aria-label="Windows"><svg viewBox="0 0 18 16"><path class="paper" d="M1.500 1.500h12v9h-12z"/><path class="paper" d="M4.500 5.500h13v9h-13zM5 7h12"/></svg></button><span>GRAPHISOFT <em>ID</em></span></footer>
</body>
</html>
```
FILE: styles.css
```css
* { box-sizing: border-box; }

body {
  margin: 0;
  height: 100vh;
  display: flex;
  flex-direction: column;
  overflow: hidden;
  background: #f0f0f0;
  color: #111;
  font: 11px/16px "Open Sans", "Noto Sans", sans-serif;
}

h1, h2, h3, p, ul { margin: 0; padding: 0; font: inherit; }
a { color: inherit; text-decoration: none; }
i { display: block; }

svg {
  display: block;
  flex: none;
  fill: none;
  stroke: currentColor;
  stroke-width: 1;
}
.defs { position: absolute; width: 0; height: 0; }
.solid { fill: currentColor; stroke: none; }
.paper { fill: #fbfcfd; }
.greyfill { fill: #8b9196; }
.blue { stroke: #2f7de1; color: #2f7de1; }
.bsolid { fill: #2f7de1; stroke: none; }
.orange { stroke: #f0954a; }
.mid { stroke: #9a9fa3; }
.red { stroke: #e8452c; stroke-width: 2; }

button {
  font: inherit;
  color: #2b353b;
  background: none;
  border: 0;
  padding: 0;
  display: flex;
  align-items: center;
  justify-content: center;
}
.dim, .dim button { color: #a6a9ab; }
.tb.pale { color: #b5c6e2; }
.tb.dim, .nav .dim { color: #b0b2b4; }

input, select {
  font: inherit;
  color: #111;
  background: #fff;
  border: 1px solid #7a7a7a;
  border-radius: 0;
  padding: 0 3px;
  min-width: 0;
  width: 100%;
  height: 22px;
  outline: 0;
}
input:disabled { background: #f0f0f0; border-color: #c6c6c6; color: #777; }
input.ro { background: #f0f0f0; }
input.focus { border-color: #2170b8; }

select { appearance: none; padding: 0 6px; grid-area: 1 / 1; }
.sel { display: grid; align-items: center; }
.sel svg { grid-area: 1 / 1; justify-self: end; margin-right: 4px; width: 10px; height: 6px; color: #444; pointer-events: none; }

.ar { width: 8px; height: 8px; color: #333; }
.eye { width: 18px; height: 12px; }
.s30 { width: 30px; height: 20px; }
.s28 { width: 28px; height: 28px; }
.d { width: 18px; height: 16px; color: #2b353b; }
.d.blue { color: #2f7de1; }
.grow { flex: 1; min-width: 0; }
.clip { flex: 1; white-space: nowrap; overflow: hidden; text-align: left; }

.btn { background: #e1e1e1; border: 1px solid #adadad; color: #111; }
.on { background: #bfdcf3; outline: 1px solid #98c9ee; outline-offset: -1px; }

/* menu */
.menu { display: flex; flex: none; height: 19px; background: #fff; color: #6d6d6d; padding: 3px 4px 0; gap: 15px; }
.winctl { width: 36px; height: 12px; margin: 2px 0 0 auto; color: #aaa; }

/* toolbar */
.toolbar { display: flex; flex: none; align-items: center; height: 37px; padding-left: 2px; border-bottom: 1px solid #d9d9d9; }
.toolbar::before { content: ""; width: 1px; height: 24px; background: #888; }
.tb { width: 25px; height: 30px; flex: none; }
.tb svg { width: 20px; height: 20px; }
.dd { width: 18px; height: 30px; }
.dd svg { width: 8px; height: 6px; }
.split { display: flex; width: 46px; }
.split .tb { width: 28px; }
.split.on .tb { width: 31px; border-right: 1px solid #98c9ee; }
.split.on .dd { width: 15px; }
.wide { width: 34px; }
.sep { width: 1px; height: 28px; margin: 0 5px 0 3px; background: #8c8c8c; }
.sep.tight { margin: 0 3px 0 2px; }

/* info box */
.infobox {
  display: grid;
  flex: none;
  grid-template-columns: minmax(0, 187fr) repeat(9, minmax(0, 185fr)) minmax(0, 59fr);
  height: 60px;
  border-bottom: 1px solid #d9d9d9;
}
.infobox section { padding: 2px 4px 0; margin-bottom: 1px; border-right: 1px solid #9b9b9b; }
.infobox section:last-child { border: 0; padding-left: 5px; }
.infobox section:first-child { padding-left: 6px; }
.infobox h2 { font-size: 9px; line-height: 14px; white-space: nowrap; }
.tiny { font-size: 9px; line-height: 12px; }
.row { display: flex; align-items: center; height: 43px; gap: 4px; }
.between { justify-content: space-between; }
.tightrow { gap: 1px; padding-right: 1px; }
.row .btn { height: 28px; }
.row .btn.grow { padding: 0 2px 0 5px; gap: 4px; }
.b47 { width: 47px; }
.b41 { width: 41px; }
.bar { border-left: 1px solid #adadad; width: 13px; height: 22px; padding-left: 3px; }
.geo { padding-left: 6px; gap: 14px; }
.hr { gap: 0; padding-left: 2px; justify-content: flex-start; }
.ib { width: 42px; height: 29px; }
.row .vr { width: 40px; height: 38px; }
.stack { display: grid; gap: 3px; }
.stack input, .pair input { height: 18px; }
.pair { display: grid; grid-template-columns: 44px 1fr; gap: 3px 0; align-items: center; }
.mini { width: 13px; height: 13px; background: #cfcfcf; border: 1px solid #bdbdbd; }
.mini .ar { color: #8a8a8a; width: 6px; }
.stack + .mini { margin: 0 3px 0 1px; }
.dots { width: 17px; height: 22px; background: #ccc; color: #888; }
.row input.ro { height: 20px; }

/* main columns */
.main { display: grid; grid-template-columns: 44px minmax(0, 1fr) 174px; flex: 1; min-height: 0; }

.tools { border-right: 1px solid #d0d0d0; overflow: hidden; display: flex; flex-direction: column; }
.handle { flex: none; width: 18px; height: 1px; margin: 5px auto 3px; background: #888; }
.tools button { flex: none; height: 30px; width: 43px; padding-right: 3px; }
.tools button svg { width: 30px; height: 24px; }
.tools h3 { flex: none; height: 20px; margin: 4px 0 1px; background: #d4d4d4; border-radius: 0 4px 4px 0; line-height: 20px; white-space: nowrap; overflow: hidden; }
.tools h3.mid-head { margin: 5px 0 2px; }
.tools h3.last { margin: auto 0 0; position: sticky; bottom: 0; }

.center { display: flex; flex-direction: column; min-width: 0; min-height: 0; }
.tabs { display: flex; flex: none; height: 23px; background: #d9d9d9; }
.grid4 { width: 26px; }
.grid4 svg { width: 18px; height: 14px; }
.tab { flex: 1; min-width: 0; display: flex; align-items: center; gap: 2px; padding-left: 4px; border-right: 1px solid #bfbfbf; white-space: nowrap; overflow: hidden; }
.tab.cur { background: #fff; border: 0; }
.tab b { margin-left: auto; padding-right: 9px; font-size: 14px; }
.tabmenu { width: 52px; background: #f0f0f0; gap: 7px; }
.tm { width: 22px; height: 14px; }

.canvas { position: relative; flex: 1; min-height: 0; background: #fff; }
.plan { position: absolute; left: 0; top: 0; width: 100%; height: 100%; stroke: none; }
.plan text { font: 20px "Liberation Sans", sans-serif; fill: #e07a22; }
.grip { position: absolute; width: 32px; height: 16px; background: #f4f4f4; display: grid; place-items: center; }
.grip::before { content: ""; width: 26px; height: 1px; background: repeating-linear-gradient(90deg, #f0a35e 0 5px, transparent 5px 7px); }
.grip.v { width: 16px; height: 32px; }
.grip.v::before { width: 1px; height: 26px; background: repeating-linear-gradient(#f0a35e 0 5px, transparent 5px 7px); }
.g-top { top: 1px; left: 830px; }
.g-bot { bottom: 1px; left: 830px; }
.g-left { left: 1px; top: 402px; }
.g-right { right: 3px; top: 402px; }

.viewbar { display: flex; flex: none; height: 20px; border-bottom: 1px solid #d0d0d0; }
.viewbar > * { flex: 1; min-width: 0; border-left: 1px solid #8f8f8f; }
.viewbar .nav { flex: none; width: 71px; border: 0; display: flex; justify-content: space-around; }
.viewbar svg { width: 16px; height: 16px; }
.viewbar > button { display: grid; grid-template-columns: 27px 1fr 16px; justify-items: center; white-space: nowrap; }
.viewbar > button svg.ar { width: 8px; height: 8px; }
.viewbar span { min-width: 0; }

/* dialog */
.dialog {
  position: absolute;
  left: 905px;
  top: 24px;
  width: 512px;
  background: #f0f0f0;
  border: 1px solid #6f6f6f;
  box-shadow: 0 4px 16px rgba(0, 0, 0, .35);
}
.dialog header { display: flex; align-items: center; height: 30px; background: #fff; padding: 0 1px 0 9px; }
.logo { width: 14px; height: 14px; }
.dialog h1 { flex: 1; padding-left: 6px; }
.plain { width: 45px; font-size: 14px; color: #111; }
.plain svg { width: 11px; height: 11px; }
.body { padding: 11px 15px 11px; display: flex; flex-direction: column; }
.line { display: flex; justify-content: space-between; align-items: center; }
.top { height: 23px; margin-bottom: 11px; }
.star { width: 38px; height: 23px; gap: 6px; margin-left: 1px; }
.star svg:first-child { width: 18px; height: 18px; }
.star .ar { width: 6px; }
.chapter { height: 22px; justify-content: flex-start; background: #d5d5d5; border-radius: 3px; padding-left: 5px; gap: 8px; font-weight: 700; color: #111; white-space: nowrap; }
.chapter .ar { width: 8px; }
.ci { width: 20px; height: 18px; margin-right: -3px; color: #2b353b; }
.chapter .paper { fill: #d5d5d5; }
.field { display: grid; grid-template-columns: 140px 1fr; align-items: center; margin-top: 7px; }
.field input { height: 23px; }
.field.first { margin-top: 5px; }
.field.stories { margin-top: 8px; }
.caretbox { position: relative; }
.caretbox i { position: absolute; left: 27px; top: 5px; width: 1px; height: 13px; background: #000; }
.mt7 { margin-top: 7px; }
.mref { margin: 12px 0 5px; }
.vp .sel { width: 330px; }
.browse { width: 118px; height: 21px; margin-right: 1px; background: #ccc; border: 1px solid #bfbfbf; color: #838383; }
.field.ref { grid-template-columns: 113px 27px 1fr; margin-top: 8px; }
hr { width: 100%; border: 0; height: 1px; background: #9d9d9d; margin: 7px 0 2px; }
hr.low { margin: 12px 0 11px; }
.ranges { display: grid; grid-template-columns: 200px 140px 1fr; }
.rad { display: flex; align-items: center; height: 30px; }
.rad input { appearance: none; flex: none; width: 14px; height: 14px; margin: 0 3px 0 15px; padding: 0; border: 1px solid #333; border-radius: 50%; }
.rad input:checked { background: radial-gradient(circle, #222 0 3px, #fff 4px); }
.rad .s30 { margin: 0 6px 0 2px; }
.limits { display: grid; grid-template-columns: 1fr 90px; align-content: start; padding-top: 30px; color: #7c7c7c; }
.zero { grid-column: 1 / 3; display: flex; align-items: center; justify-content: flex-end; gap: 6px; height: 19px; padding-right: 1px; }
.limits .s28 { align-self: center; margin-left: 17px; margin-bottom: 12px; color: #a9abad; }
.nums { display: grid; gap: 7px; }
.nums input { height: 23px; box-shadow: inset 0 0 0 1px #fff; }
.chapters { display: grid; gap: 5px; margin-top: 1px; }
.actions { display: flex; align-items: center; height: 22px; padding-right: 1px; }
.actions .btn { flex: 1; height: 21px; gap: 5px; padding: 0 1px 0 4px; }
.actions .btn.push { flex: none; width: 88px; padding: 0; margin-left: 12px; }
.actions .clip + .ar { width: 8px; }
.actions .btn.push:not(.ok) { margin-left: 17px; }
.actions .btn.ok { border: 2px solid #0b74cc; }
.lay { width: 26px; height: 16px; margin: 0 8px 0 2px; }
.corner { position: absolute; right: 2px; bottom: 1px; width: 9px; height: 9px; color: #b5b5b5; }
.note { position: absolute; border: 5px solid #ff832b; }
.n1 { left: -3px; top: -3px; width: 191px; height: 38px; }
.n2 { left: 15px; top: 404px; width: 138px; height: 39px; }

/* navigator */
.navigator { display: flex; flex-direction: column; min-height: 0; overflow: hidden; }
.navigator .handle { width: 68px; margin: 5px auto 4px; }
.navtabs { display: flex; flex: none; align-items: center; height: 30px; padding-left: 2px; }
.navtabs button { width: 30px; height: 29px; flex: none; }
.navtabs button svg { width: 18px; height: 16px; }
.navtabs i { width: 1px; height: 18px; margin: 0 6px 0 5px; background: #8c8c8c; }
.navtabs .burger { width: 36px; height: 22px; gap: 4px; margin-left: 11px; }
.navtabs .burger svg { width: 12px; height: 12px; }
.navtabs .burger .ar { width: 8px; height: 8px; }
.search { display: flex; flex: none; align-items: center; height: 22px; margin: 5px -1px 3px 2px; border: 1px solid #7a7a7a; background: #fff; padding-left: 4px; }
.search svg { width: 14px; height: 14px; color: #666; }
.search input { border: 0; height: 20px; padding-left: 5px; }
.search input::placeholder { color: #666; opacity: 1; }
.treewrap { display: grid; grid-template-columns: minmax(0, 1fr) 10px; flex: 1; min-height: 0; overflow: hidden; }
.tree { list-style: none; background: #fff; overflow: hidden; }
.tree li { display: flex; align-items: center; height: 22px; white-space: nowrap; overflow: hidden; gap: 5px; }
.tw { width: 9px; height: 6px; margin: 0 -1px 0 0; color: #444; stroke-width: 2; }
.tree .l0 { padding-left: 8px; gap: 6px; }
.l1 { padding-left: 18px; }
.l1.leaf { padding-left: 31px; }
.l2 { padding-left: 41px; }
.l1 .paper { fill: #e9e9e9; }
.cur { font-weight: 700; background: #d9d9d9; }
.tab.cur { font-weight: 400; }
.shut .tw { transform: rotate(-90deg); color: #999; }
.vscroll { display: flex; flex-direction: column; align-items: center; padding: 7px 0 5px; }
.vscroll svg, .hscroll svg { width: 9px; height: 6px; color: #555; stroke-width: 2; }
.up { transform: rotate(180deg); }
.vscroll i { width: 10px; flex: 0 1 577px; margin: 4px 0 auto; background: #cdcdcd; }
.hscroll { display: flex; flex: none; align-items: center; height: 16px; padding: 0 14px 0 4px; }
.hscroll i { width: 66px; height: 15px; margin: 0 auto 0 4px; background: #cdcdcd; }
.lf { transform: rotate(90deg); }
.rt { transform: rotate(-90deg); }
.treeacts { display: flex; flex: none; height: 34px; gap: 14px; padding-left: 9px; }
.treeacts svg { width: 16px; height: 16px; }
.prophead { flex: none; height: 22px; justify-content: flex-start; gap: 10px; padding-left: 7px; margin-left: 2px; background: #d5d5d5; border-radius: 4px 0 0 0; color: #111; }
.prop { display: flex; flex: none; align-items: center; height: 20px; margin: 4px -1px 3px 5px; gap: 4px; }
.prop svg { width: 14px; height: 12px; }
.prop label { width: 35px; }
.prop input { height: 20px; flex: 1; }
.settings { flex: none; height: 22px; margin: 0 -1px 2px 3px; }

.status { display: flex; flex: none; justify-content: flex-end; align-items: center; height: 21px; border-top: 1px solid #d9d9d9; padding-right: 18px; color: #3b4247; }
.status svg { width: 17px; height: 15px; margin-right: 4px; }
.status span { border: solid #dcdcdc; border-width: 0 1px; padding: 0 16px; font: 600 13px/20px Lato, sans-serif; }
.status em { font-style: normal; font-weight: 400; }
```
